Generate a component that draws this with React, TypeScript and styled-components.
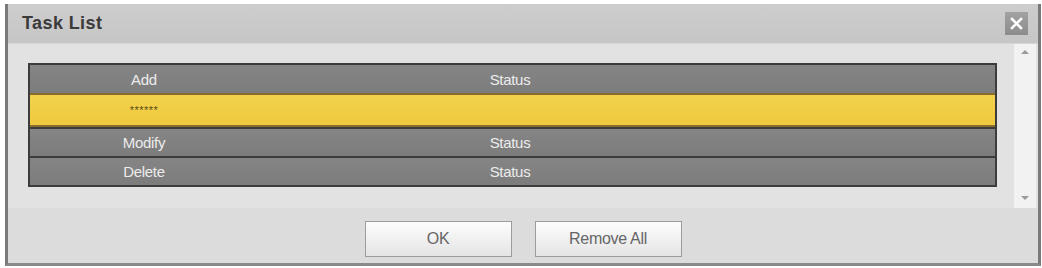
import React from 'react';
import styled, { createGlobalStyle } from 'styled-components';

const GlobalStyle = createGlobalStyle`
  html, body {
    margin: 0;
    padding: 0;
    background: #ffffff;
    font-family: "Liberation Sans", Arial, sans-serif;
  }
`;

const Page = styled.div`
  padding: 4px 1px 2px 5px;
`;

const Dialog = styled.div`
  display: flex;
  flex-direction: column;
  height: 262px;
  box-sizing: border-box;
  border-left: 3px solid #7a7a7a;
  border-right: 3px solid #7a7a7a;
  border-bottom: 3px solid #8a8a8a;
  background: #dedede;
`;

const Header = styled.div`
  display: flex;
  align-items: center;
  justify-content: space-between;
  height: 39px;
  padding: 0 10px 0 14px;
  background: linear-gradient(#cdcdcd, #c6c6c6);
  border-bottom: 1px solid #d6d6d6;
`;

const Title = styled.h1`
  margin: 0;
  font-size: 18px;
  font-weight: bold;
  letter-spacing: 0.4px;
  color: #3a3a3a;
`;

const CloseButton = styled.button`
  width: 23px;
  height: 23px;
  padding: 0;
  border: none;
  background: linear-gradient(#a2a2a2, #8c8c8c);
  display: flex;
  align-items: center;
  justify-content: center;
`;

const Body = styled.div`
  display: flex;
  height: 164px;
  background: #e2e2e2;
`;

const TableArea = styled.div`
  flex: 1;
  padding: 19px 17px 0 20px;
`;

const Table = styled.div`
  border: 2px solid #3c3c3c;
  background: #808080;
`;

const Row = styled.div<{ $active?: boolean; $height: number }>`
  display: grid;
  grid-template-columns: 228px 504px 1fr;
  align-items: center;
  height: ${p => p.$height}px;
  box-sizing: border-box;
  background: ${p => (p.$active ? 'linear-gradient(#f2d24c, #efc93e)' : 'linear-gradient(#858585, #7c7c7c)')};
  border-top: ${p => (p.$active ? '2px solid #8a6d2a' : '2px solid #3c3c3c')};
  border-bottom: ${p => (p.$active ? '2px solid #8a6d2a' : 'none')};
  &:first-child {
    border-top: none;
  }
`;

const Cell = styled.span<{ $dark?: boolean }>`
  text-align: center;
  font-size: ${p => (p.$dark ? '11px' : '15px')};
  color: ${p => (p.$dark ? '#5e4d1c' : '#ececec')};
  letter-spacing: ${p => (p.$dark ? '0.5px' : '-0.3px')};
`;

const ScrollBar = styled.div`
  width: 22px;
  margin-right: 2px;
  background: #f2f2f2;
  display: flex;
  flex-direction: column;
  justify-content: space-between;
  align-items: center;
  padding: 6px 0 8px;
  box-sizing: border-box;
`;

const Arrow = styled.div<{ $up?: boolean }>`
  width: 0;
  height: 0;
  border-left: 4px solid transparent;
  border-right: 4px solid transparent;
  ${p => (p.$up ? 'border-bottom: 4px solid #9a9a9a;' : 'border-top: 4px solid #9a9a9a;')}
`;

const Footer = styled.div`
  flex: 1;
  display: flex;
  justify-content: center;
  gap: 23px;
  padding-top: 13px;
  background: #dcdcdc;
`;

const Button = styled.button`
  width: 147px;
  height: 36px;
  border: 1px solid #9c9c9c;
  background: linear-gradient(#fdfdfd, #e4e4e4);
  font-family: "Liberation Sans", Arial, sans-serif;
  font-size: 16px;
  letter-spacing: -0.3px;
  color: #666666;
`;

const rows = [
  { action: 'Add', status: 'Status', height: 28 },
  { action: '******', status: '', height: 34, active: true },
  { action: 'Modify', status: 'Status', height: 29 },
  { action: 'Delete', status: 'Status', height: 29 },
];

export default function App() {
  return (
    <Page>
      <GlobalStyle />
      <Dialog>
        <Header>
          <Title>Task List</Title>
          <CloseButton aria-label="Close">
            <svg width="13" height="13" viewBox="0 0 13 13">
              <path d="M2 2 L11 11 M11 2 L2 11" stroke="#ffffff" strokeWidth="2.6" strokeLinecap="square" />
            </svg>
          </CloseButton>
        </Header>
        <Body>
          <TableArea>
            <Table>
              {rows.map(r => (
                <Row key={r.action} $active={r.active} $height={r.height}>
                  <Cell $dark={r.active}>{r.action}</Cell>
                  <Cell>{r.status}</Cell>
                  <span />
                </Row>
              ))}
            </Table>
          </TableArea>
          <ScrollBar>
            <Arrow $up />
            <Arrow />
          </ScrollBar>
        </Body>
        <Footer>
          <Button>OK</Button>
          <Button>Remove All</Button>
        </Footer>
      </Dialog>
    </Page>
  );
}
